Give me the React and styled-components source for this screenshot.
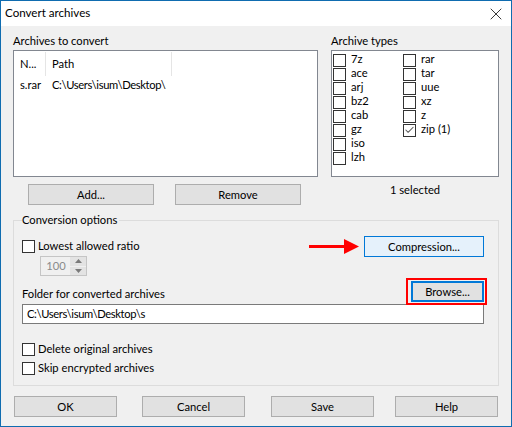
import React from "react";
import styled, { createGlobalStyle } from "styled-components";
import { X, Check } from "lucide-react";

const Global = createGlobalStyle`
  html, body { margin: 0; padding: 0; background: #f0f0f0; }
  body { font-family: Lato, "Noto Sans", sans-serif; font-size: 11.2px; color: #000; }
  * { box-sizing: border-box; }
`;

const Window = styled.div`
  width: 512px; height: 427px; border: 1px solid #0f6cb0;
  background: #f0f0f0; display: flex; flex-direction: column; overflow: hidden;
`;
const TitleBar = styled.div`
  height: 25px; flex: none; background: #fff; display: flex; align-items: center;
  justify-content: space-between; padding: 0 0 0 4px; font-size: 11.6px;
`;
const TitleText = styled.span`margin-bottom: 2px;`;
const CloseBox = styled.div`width: 20px; height: 20px; margin-right: 5px; color: #111; display: flex;`;
const Body = styled.div`
  flex: 1; display: flex; flex-direction: column; padding: 7px 12px 0 12px;
`;
const TopRow = styled.div`display: flex; gap: 13px;`;
const Column = styled.div`width: ${p => p.$w}px; flex: none; display: flex; flex-direction: column;`;
const Caption = styled.div`height: 17px; line-height: 16px; white-space: nowrap;`;
const ListBox = styled.div`
  height: 127px; background: #fff; border: 1px solid #828790; overflow: hidden;
`;
const Table = styled.div`
  display: grid; grid-template-columns: 32px 126px; padding: 1px 0 0 0;
`;
const HeadCell = styled.div`
  height: 24px; line-height: 24px; padding-left: 6px; border-right: 1px solid #e5e5e5; white-space: nowrap;
`;
const Cell = styled.div`
  height: 20px; line-height: 18px; padding-left: 6px; white-space: nowrap;
`;
const PathText = styled.span`letter-spacing: -0.35px;`;
const TypeGrid = styled.div`
  display: grid; grid-template-columns: 70px 1fr; grid-auto-flow: column;
  grid-template-rows: repeat(8, 14px); padding: 2px 0 0 1px;
`;
const TypeItem = styled.div`display: flex; align-items: center; gap: 5px; height: 14px; line-height: 14px; white-space: nowrap;`;
const ItemText = styled.span`margin-bottom: 2px;`;
const Box = styled.span`
  width: 13px; height: 13px; flex: none; background: #fff; border: 1px solid #333;
  display: inline-flex; align-items: center; justify-content: center; color: #555;
`;
const ButtonRow = styled.div`
  display: flex; gap: ${p => p.$gap || 0}px; padding-left: ${p => p.$pad || 0}px;
  margin-top: ${p => p.$top || 0}px;
`;
const Button = styled.button`
  width: ${p => p.$w}px; height: 21px; flex: none; padding: 0; font: inherit; color: #000;
  margin-left: ${p => p.$ml || 0}px;
  background: ${p => p.$hover ? "#e5f1fb" : "#e1e1e1"};
  border: ${p => p.$focus ? "2px solid #0078d7" : p.$hover ? "1px solid #0078d7" : "1px solid #adadad"};
  border-radius: 0;
`;
const Selected = styled.div`text-align: center; margin-top: 5px; height: 16px; line-height: 16px;`;
const Group = styled.fieldset`
  margin: 7px 0 0 0; padding: 0 14px 0 8px; height: 174px; border: 1px solid #dcdcdc;
  border-radius: 0; min-width: 0; width: 486px; display: block;
`;
const Legend = styled.legend`
  padding: 0 2px 0 0; margin-left: 0; line-height: 16px; height: 16px;
`;
const OptionRow = styled.div`
  display: flex; align-items: center; justify-content: space-between;
  margin-top: ${p => p.$top || 0}px;
`;
const Check1 = styled.label`display: flex; align-items: center; gap: 3px; height: 13px; line-height: 12px; white-space: nowrap;`;
const FieldLabel = styled.span`padding-top: 4px;`;
const Right = styled.div`display: flex; align-items: center; gap: 5px;`;
const Spinner = styled.div`
  width: 47px; height: 20px; margin: -1px 0 0 18px; border: 1px solid #c5c5c5; background: #f0f0f0;
  display: flex; color: #8a8a8a;
`;
const SpinValue = styled.div`flex: 1; text-align: center; line-height: 18px; padding-left: 1px;`;
const SpinBtns = styled.div`
  width: 16px; display: flex; flex-direction: column; gap: 1px; background: #f0f0f0;
`;
const SpinBtn = styled.div`
  flex: 1; background: #e3e3e3; display: flex; align-items: center; justify-content: center;
`;
const Highlight = styled.div`
  position: relative; display: flex;
  &::after {
    content: ""; position: absolute; left: -5px; top: -3px; right: -3px; bottom: -3px;
    border: 2px solid #f00; pointer-events: none;
  }
`;
const PathInput = styled.div`
  height: 20px; margin-top: 2px; background: #fff; border: 1px solid #7a7a7a;
  padding-left: 4px; line-height: 17px; white-space: nowrap;
`;
const Footer = styled.div`display: flex; margin: 10px 0 0 1px;`;

const Cb = ({ on }) => <Box>{on && <Check size={12} strokeWidth={2.2} />}</Box>;

const left = ["7z", "ace", "arj", "bz2", "cab", "gz", "iso", "lzh"];
const right = ["rar", "tar", "uue", "xz", "z", "zip (1)"];

export default function App() {
  return (
    <>
      <Global />
      <Window>
        <TitleBar>
          <TitleText>Convert archives</TitleText>
          <CloseBox><X size={20} strokeWidth={1} /></CloseBox>
        </TitleBar>
        <Body>
          <TopRow>
            <Column $w={305}>
              <Caption>Archives to convert</Caption>
              <ListBox>
                <Table>
                  <HeadCell>N...</HeadCell>
                  <HeadCell>Path</HeadCell>
                  <Cell>s.rar</Cell>
                  <Cell><PathText>C:\Users\isum\Desktop\</PathText></Cell>
                </Table>
              </ListBox>
              <ButtonRow $gap={21} $pad={15} $top={7}>
                <Button $w={126}>Add...</Button>
                <Button $w={126}>Remove</Button>
              </ButtonRow>
            </Column>
            <Column $w={168}>
              <Caption>Archive types</Caption>
              <ListBox>
                <TypeGrid>
                  {left.map(t => <TypeItem key={t}><Cb /><ItemText>{t}</ItemText></TypeItem>)}
                  {right.map(t => <TypeItem key={t}><Cb on={t === "zip (1)"} /><ItemText>{t}</ItemText></TypeItem>)}
                </TypeGrid>
              </ListBox>
              <Selected>1 selected</Selected>
            </Column>
          </TopRow>
          <Group>
            <Legend>Conversion options</Legend>
            <OptionRow $top={8}>
              <Check1><Cb /><ItemText>Lowest allowed ratio</ItemText></Check1>
              <Right>
                <svg width="50" height="16" viewBox="0 0 50 16">
                  <rect x="0" y="6" width="36" height="3" fill="#f00" />
                  <path d="M35 0 L50 7.5 L35 15 Z" fill="#f00" />
                </svg>
                <Button $w={120} $hover>Compression...</Button>
              </Right>
            </OptionRow>
            <Spinner>
              <SpinValue>100</SpinValue>
              <SpinBtns>
                <SpinBtn><svg width="7" height="4"><path d="M3.5 0L7 4H0Z" fill="#7a7a7a" /></svg></SpinBtn>
                <SpinBtn><svg width="7" height="4"><path d="M0 0H7L3.5 4Z" fill="#7a7a7a" /></svg></SpinBtn>
              </SpinBtns>
            </Spinner>
            <OptionRow $top={5}>
              <FieldLabel>Folder for converted archives</FieldLabel>
              <Highlight><Button $w={73} $focus>Browse...</Button></Highlight>
            </OptionRow>
            <PathInput><PathText>C:\Users\isum\Desktop\s</PathText></PathInput>
            <OptionRow $top={19}><Check1><Cb /><ItemText>Delete original archives</ItemText></Check1></OptionRow>
            <OptionRow $top={6}><Check1><Cb /><ItemText>Skip encrypted archives</ItemText></Check1></OptionRow>
          </Group>
          <Footer>
            <Button $w={103}>OK</Button>
            <Button $w={103} $ml={25}>Cancel</Button>
            <Button $w={103} $ml={26}>Save</Button>
            <Button $w={103} $ml={21}>Help</Button>
          </Footer>
        </Body>
      </Window>
    </>
  );
}
